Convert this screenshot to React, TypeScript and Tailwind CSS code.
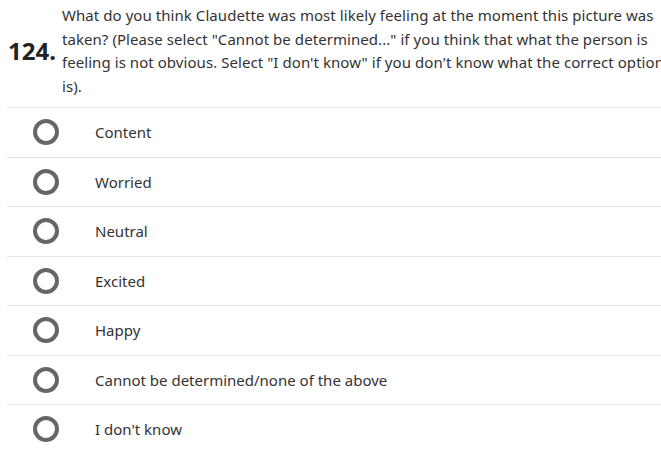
const options = [
  "Content",
  "Worried",
  "Neutral",
  "Excited",
  "Happy",
  "Cannot be determined/none of the above",
  "I don't know",
];

export default function App() {
  return (
    <div
      className="w-[661px] h-[452px] overflow-hidden bg-white text-[#333]"
      style={{ fontFamily: '"Noto Sans", "Open Sans", sans-serif' }}
    >
      <div className="flex items-center pl-2 pt-[4px] pb-[9px]">
        <div className="w-[54px] shrink-0 text-[24px] font-bold leading-none text-[#222]">124.</div>
        <p className="w-[625px] shrink-0 text-[15px] tracking-[0.06px] leading-[23.5px]">
          What do you think Claudette was most likely feeling at the moment this picture was taken?
          (Please select "Cannot be determined..." if you think that what the person is feeling is
          not obvious. Select "I don't know" if you don't know what the correct option is).
        </p>
      </div>
      <ul className="ml-[7px]">
        {options.map((o) => (
          <li key={o} className="flex items-center h-[49.5px] border-t border-[#e2e2e2]">
            <span className="ml-[26px] w-[26px] h-[26px] rounded-full border-[4px] border-[#666] shrink-0" />
            <span className="ml-[36px] text-[15px]">{o}</span>
          </li>
        ))}
      </ul>
    </div>
  );
}
